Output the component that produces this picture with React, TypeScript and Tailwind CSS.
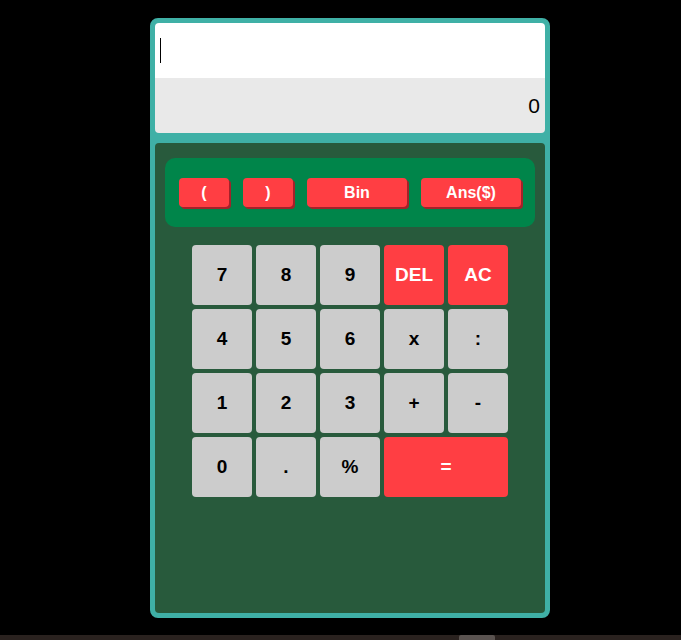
import React from 'react';

const keys: { label: string; red?: boolean; wide?: boolean }[] = [
  { label: '7' },
  { label: '8' },
  { label: '9' },
  { label: 'DEL', red: true },
  { label: 'AC', red: true },
  { label: '4' },
  { label: '5' },
  { label: '6' },
  { label: 'x' },
  { label: ':' },
  { label: '1' },
  { label: '2' },
  { label: '3' },
  { label: '+' },
  { label: '-' },
  { label: '0' },
  { label: '.' },
  { label: '%' },
  { label: '=', red: true, wide: true },
];

const topKeys = [
  { label: '(', w: 'w-[50px]' },
  { label: ')', w: 'w-[50px]' },
  { label: 'Bin', w: 'w-[100px]' },
  { label: 'Ans($)', w: 'w-[100px]' },
];

export default function App() {
  return (
    <div className="h-[640px] w-full bg-black flex flex-col overflow-hidden font-['Liberation_Sans',Arial,sans-serif]">
      {/* Calculator */}
      <div className="ml-[150px] mt-[18px] w-[400px] h-[600px] border-[5px] border-[#3fb0a6] bg-[#3fb0a6] rounded-[8px] flex flex-col">
        {/* Display */}
        <div className="rounded-[4px] overflow-hidden">
          <div className="h-[55px] bg-white flex items-center pl-[5px]">
            <div className="w-px h-[25px] bg-black" />
          </div>
          <div className="h-[55px] bg-[#e9e9e9] flex items-center justify-end pr-[5px] text-[21px] text-black">
            0
          </div>
        </div>

        {/* Keys panel */}
        <div className="mt-[10px] flex-1 bg-[#285a3c] rounded-[4px] pt-[15px] px-[10px]">
          <div className="h-[69px] bg-[#00854a] rounded-[10px] flex items-center gap-[14px] px-[14px]">
            {topKeys.map((k) => (
              <button
                key={k.label}
                className={`${k.w} h-[29px] bg-[#ff3e43] rounded-[4px] shadow-[2px_2px_0_#a3222a] text-white font-bold text-[16px] flex items-center justify-center`}
              >
                {k.label}
              </button>
            ))}
          </div>

          <div className="mt-[18px] mx-auto w-[316px] grid grid-cols-5 gap-[4px]">
            {keys.map((k) => (
              <button
                key={k.label}
                className={`h-[60px] rounded-[4px] font-bold text-[19px] flex items-center justify-center ${
                  k.wide ? 'col-span-2' : ''
                } ${k.red ? 'bg-[#ff3e43] text-white' : 'bg-[#cccccc] text-black'}`}
              >
                {k.label}
              </button>
            ))}
          </div>
        </div>
      </div>

      {/* bottom scrollbar strip */}
      <div className="mt-auto h-[5px] w-full bg-[#2a221f] relative">
        <div className="absolute left-[459px] top-0 h-[5px] w-[36px] bg-[#5a5350] rounded-t-[2px]" />
      </div>
    </div>
  );
}
